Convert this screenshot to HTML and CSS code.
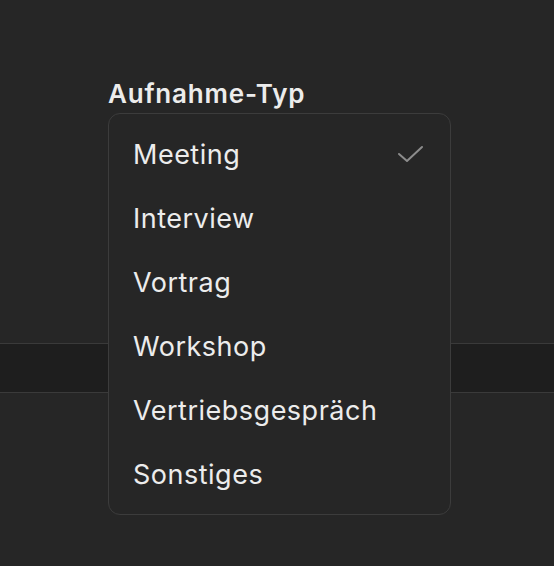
FILE: index.html
```html
<!DOCTYPE html>
<html lang="de">
<head>
    <meta charset="UTF-8">
    <meta name="viewport" content="width=device-width, initial-scale=1.0">
    <title>Aufnahme-Typ</title>
    <link rel="stylesheet" href="styles.css">
</head>
<body>
    <div class="page">
        <div class="field">
            <label class="field-label">Aufnahme-Typ</label>
        </div>
        <div class="band"></div>

        <ul class="menu">
            <li class="menu-item selected">
                <span>Meeting</span>
                <svg class="check" width="28" height="20" viewBox="0 0 28 20">
                    <path d="M2 10 L10 17 L25 3" fill="none" stroke="#8c8c8c" stroke-width="2" stroke-linecap="round" stroke-linejoin="round"/>
                </svg>
            </li>
            <li class="menu-item"><span>Interview</span></li>
            <li class="menu-item"><span>Vortrag</span></li>
            <li class="menu-item"><span>Workshop</span></li>
            <li class="menu-item"><span>Vertriebsgespräch</span></li>
            <li class="menu-item"><span>Sonstiges</span></li>
        </ul>
    </div>
</body>
</html>
```

FILE: styles.css
```css
html, body {
    margin: 0;
    padding: 0;
    height: 100%;
}
body {
    font-family: Inter, "Noto Sans", sans-serif;
    background-color: #262626;
    color: #ececec;
    overflow: hidden;
}
.page {
    position: relative;
    height: 100%;
}
.field {
    padding: 78px 0 0 108px;
    height: 265px;
}
.field-label {
    display: block;
    font-size: 26px;
    font-weight: 600;
    line-height: 32px;
    letter-spacing: 0.8px;
    color: #ececec;
}
.band {
    height: 48px;
    background-color: #1e1e1e;
    border-top: 1px solid #3a3a3a;
    border-bottom: 1px solid #3a3a3a;
}
.menu {
    position: absolute;
    top: 113px;
    left: 108px;
    width: 343px;
    box-sizing: border-box;
    margin: 0;
    padding: 8px 0;
    list-style: none;
    background-color: #262626;
    border: 1px solid #3c3c3c;
    border-radius: 12px;
}
.menu-item {
    display: flex;
    align-items: center;
    justify-content: space-between;
    height: 64px;
    padding: 0 25px 0 24px;
    font-size: 27px;
    letter-spacing: 0.5px;
    color: #ececec;
}
.check {
    display: block;
}
```
